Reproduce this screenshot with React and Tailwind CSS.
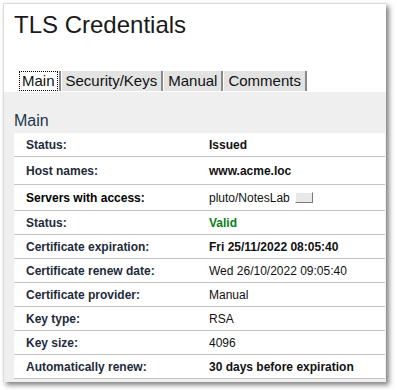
import React from "react";

const rows = [
  { label: "Status:", value: "Issued", h: "h-[24px]", vb: true },
  { label: "Host names:", value: "www.acme.loc", h: "h-[28px]", vb: true },
  { label: "Servers with access:", value: "pluto/NotesLab", h: "h-[26px]", btn: true, lb: "text-black" },
  { label: "Status:", value: "Valid", h: "h-[24px]", vb: true, green: true },
  { label: "Certificate expiration:", value: "Fri 25/11/2022 08:05:40", h: "h-[24px]", vb: true },
  { label: "Certificate renew date:", value: "Wed 26/10/2022 09:05:40", h: "h-[24px]" },
  { label: "Certificate provider:", value: "Manual", h: "h-[24px]" },
  { label: "Key type:", value: "RSA", h: "h-[24px]" },
  { label: "Key size:", value: "4096", h: "h-[24px]" },
  { label: "Automatically renew:", value: "30 days before expiration", h: "h-[24px]", vb: true },
];

const tabs = ["Main", "Security/Keys", "Manual", "Comments"];

export default function App() {
  return (
    <div className="w-[397px] h-[390px] bg-white pt-[3px] pl-[3px] font-['Liberation_Sans',Arial,sans-serif]">
      <div className="w-[383px] h-[379px] bg-white border-l border-t border-[#dadada] shadow-[3px_3px_5px_rgba(0,0,0,0.5)] flex flex-col">
        <h1 className="mt-[7px] ml-[10px] text-[24px] leading-[28px] text-[#1a1a1a]">TLS Credentials</h1>
        <div className="mt-[32px] pl-[13px] flex h-[20px]">
          {tabs.map((t, i) => (
            <div
              key={t}
              className={
                "ml-[1px] px-[4px] border-r-2 border-[#8a8a8a] flex items-center text-[15px] leading-[18px] text-[#111] " +
                (i === 0 ? "bg-white" : "bg-[#e3e3e3]")
              }
            >
              {i === 0 ? (
                <span className="outline outline-1 outline-dotted outline-black -mx-[2px] px-[2px]">{t}</span>
              ) : (
                t
              )}
            </div>
          ))}
        </div>
        <div className="h-[1px] bg-white" />
        <div className="flex-1 bg-[#efefef] pl-[10px] flex flex-col">
          <div className="mt-[20px] mb-[3px] text-[16px] leading-[18px] text-[#22364c]">Main</div>
          <div className="bg-white mr-[1px]">
            {rows.map((r, i) => (
              <div key={i} className={"flex items-center border-b border-[#c4c4c4] " + r.h}>
                <div className={"w-[195px] pl-[12px] text-[12px] font-bold " + (r.lb || "text-[#1e2b3b]")}>{r.label}</div>
                <div
                  className={
                    "flex items-center text-[12px] " +
                    (r.vb ? "font-bold " : "") +
                    (r.green ? "text-[#0a7d16]" : "text-[#111]")
                  }
                >
                  {r.value}
                  {r.btn && (
                    <span className="ml-[5px] inline-block w-[18px] h-[11px] bg-[#e8e8e8] border border-t-white border-l-white border-r-[#7a7a7a] border-b-[#7a7a7a]" />
                  )}
                </div>
              </div>
            ))}
          </div>
        </div>
      </div>
    </div>
  );
}
